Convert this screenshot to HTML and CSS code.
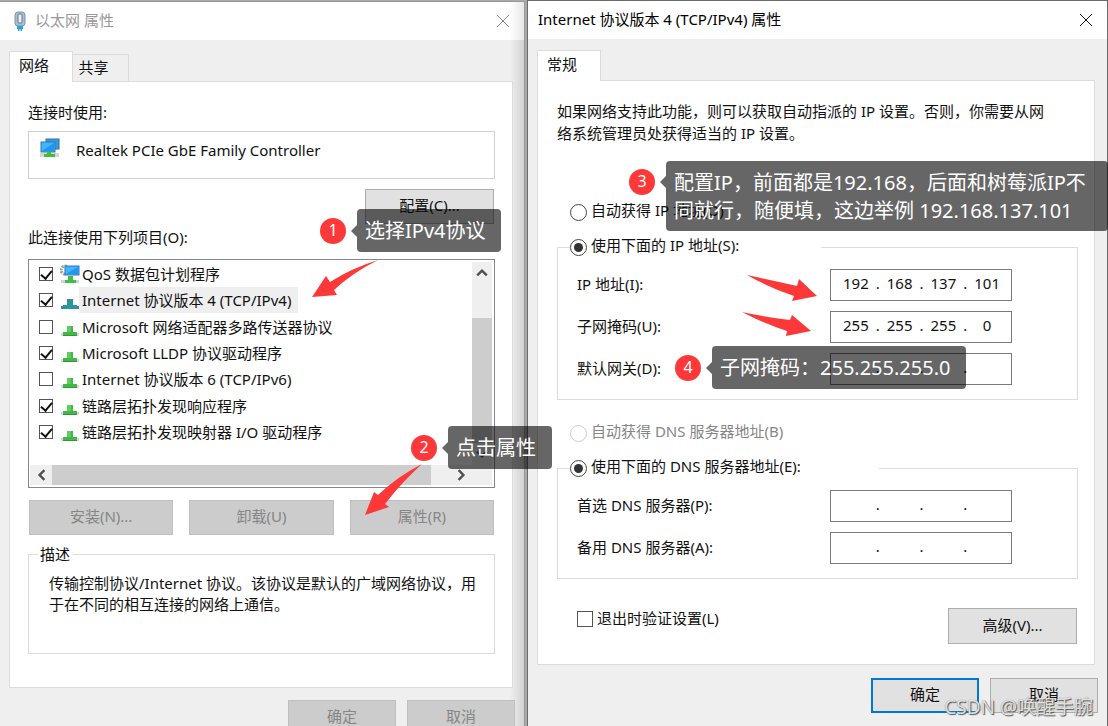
FILE: index.html
```html
<!DOCTYPE html>
<html lang="zh-CN">
<head>
  <meta charset="UTF-8">
  <title>以太网 属性</title>
  <link rel="stylesheet" href="styles.css">
</head>
<body>
  <!-- shared icons -->
  <svg class="sprite" aria-hidden="true">
    <symbol id="protocol" viewBox="0 0 18 12">
      <path d="M0 8h4v3H0zM14 8h4v3h-4z" fill="#d8d8d8"/>
      <path d="M6 1h6v6h4v4H2V7h4z" fill="#45b648"/>
      <path d="M6 1h4v6H6z" fill="#5fce5c"/>
      <path d="M2 10h14v1H2z" fill="#2f9b38"/>
    </symbol>
    <symbol id="close" viewBox="0 0 14 14">
      <path d="M1 1l12 12M13 1L1 13" fill="none" stroke="currentColor"/>
    </symbol>
    <symbol id="chevron" viewBox="0 0 10 10">
      <path d="M1 7l4-4 4 4" fill="none" stroke="#505050" stroke-width="2"/>
    </symbol>
  </svg>

  <main class="desktop">
    <section class="dialog inactive">
      <header class="titlebar">
        <svg class="plug" viewBox="0 0 12 20" width="12" height="20">
          <rect x="1" y="1" width="10" height="14" rx="3" fill="#a9c0d2" stroke="#7d94a8"/>
          <rect x="4" y="3" width="4" height="9" rx="1" fill="#e8eff5" stroke="#66798b"/>
          <path d="M3 15h6v3H8v2H6.500v-2h-1v2H4v-2H3z" fill="#25a5da"/>
        </svg>
        <h1>以太网 属性</h1>
        <button class="close" aria-label="关闭"><svg><use href="#close"/></svg></button>
      </header>

      <nav class="tabs">
        <button class="tab active">网络</button>
        <button class="tab">共享</button>
      </nav>

      <div class="panel">
        <p class="label">连接时使用:</p>
        <div class="adapter">
          <svg viewBox="0 0 20 20" width="20" height="20">
            <path d="M0 15h19v4H0z" fill="#d5d5d5"/>
            <rect x="6" y="1" width="13" height="10" fill="#2e9be8" stroke="#34719c"/>
            <rect x="1" y="4" width="14" height="10" fill="#42b4ff" stroke="#2f78ab"/>
            <path d="M2 13L14 5v8z" fill="#2196ef"/>
            <path d="M7 14h4v2h4v3H4v-3h3z" fill="#43bd3d"/>
          </svg>
          <span>Realtek PCIe GbE Family Controller</span>
        </div>
        <button class="btn configure">配置(C)...</button>

        <p class="label items-label">此连接使用下列项目(O):</p>
        <div class="listbox">
          <ul class="items">
            <li>
              <input type="checkbox" id="qos" checked>
              <svg class="qos" viewBox="0 0 20 20">
                <path d="M1 16h18v3H1z" fill="#d3d3d3"/>
                <circle cx="5" cy="6" r="4" fill="none" stroke="#98a2aa" stroke-width="3" stroke-dasharray="2 1"/>
                <rect x="5" y="2" width="14" height="9" fill="#42b4ff" stroke="#287bb5"/>
                <path d="M6 10l12-7v7z" fill="#2196ef"/>
                <path d="M8 12h5v4h3v3H5v-3h3z" fill="#43bd4a"/>
              </svg>
              <label for="qos">QoS 数据包计划程序</label>
            </li>
            <li class="selected">
              <input type="checkbox" id="ipv4" checked>
              <svg viewBox="0 0 18 12">
                <path d="M0 8h18v3H0z" fill="#3b86b4"/>
                <path d="M6 1h6v6h4v4H2V7h4z" fill="#2a9895"/>
                <path d="M6 1h6v1H6z" fill="#3b86b4"/>
              </svg>
              <label for="ipv4">Internet 协议版本 4 (TCP/IPv4)</label>
            </li>
            <li>
              <input type="checkbox" id="mux">
              <svg><use href="#protocol"/></svg>
              <label for="mux">Microsoft 网络适配器多路传送器协议</label>
            </li>
            <li>
              <input type="checkbox" id="lldp" checked>
              <svg><use href="#protocol"/></svg>
              <label for="lldp">Microsoft LLDP 协议驱动程序</label>
            </li>
            <li>
              <input type="checkbox" id="ipv6">
              <svg><use href="#protocol"/></svg>
              <label for="ipv6">Internet 协议版本 6 (TCP/IPv6)</label>
            </li>
            <li>
              <input type="checkbox" id="responder" checked>
              <svg><use href="#protocol"/></svg>
              <label for="responder">链路层拓扑发现响应程序</label>
            </li>
            <li>
              <input type="checkbox" id="mapper" checked>
              <svg><use href="#protocol"/></svg>
              <label for="mapper">链路层拓扑发现映射器 I/O 驱动程序</label>
            </li>
          </ul>
          <div class="scroll-y">
            <svg><use href="#chevron"/></svg>
            <div class="thumb"></div>
            <svg class="down"><use href="#chevron"/></svg>
          </div>
          <div class="scroll-x">
            <svg class="left"><use href="#chevron"/></svg>
            <div class="thumb"></div>
            <svg class="right"><use href="#chevron"/></svg>
          </div>
        </div>

        <div class="actions">
          <button class="btn" disabled>安装(N)...</button>
          <button class="btn" disabled>卸载(U)</button>
          <button class="btn" disabled>属性(R)</button>
        </div>

        <fieldset class="description">
          <legend>描述</legend>
          <p>传输控制协议/Internet 协议。该协议是默认的广域网络协议，用于在不同的相互连接的网络上通信。</p>
        </fieldset>
      </div>

      <footer class="buttons">
        <button class="btn" disabled>确定</button>
        <button class="btn" disabled>取消</button>
      </footer>
    </section>

    <section class="dialog front">
      <header class="titlebar">
        <h1>Internet 协议版本 4 (TCP/IPv4) 属性</h1>
        <button class="close" aria-label="关闭"><svg><use href="#close"/></svg></button>
      </header>

      <nav class="tabs">
        <button class="tab active">常规</button>
      </nav>

      <form class="panel">
        <p class="intro">如果网络支持此功能，则可以获取自动指派的 IP 设置。否则，你需要从网<br>络系统管理员处获得适当的 IP 设置。</p>

        <div class="choice">
          <input type="radio" name="ip" id="ip-auto">
          <label for="ip-auto">自动获得 IP 地址(O)</label>
        </div>
        <fieldset class="group">
          <legend class="choice">
            <input type="radio" name="ip" id="ip-manual" checked>
            <label for="ip-manual">使用下面的 IP 地址(S):</label>
          </legend>
          <div class="row">
            <label for="ip1">IP 地址(I):</label>
            <div class="ip">
              <input id="ip1" value="192">.<input aria-label="IP 2" value="168">.<input aria-label="IP 3" value="137">.<input aria-label="IP 4" value="101">
            </div>
          </div>
          <div class="row">
            <label for="mask1">子网掩码(U):</label>
            <div class="ip">
              <input id="mask1" value="255">.<input aria-label="掩码 2" value="255">.<input aria-label="掩码 3" value="255">.<input aria-label="掩码 4" value="0">
            </div>
          </div>
          <div class="row">
            <label for="gw1">默认网关(D):</label>
            <div class="ip">
              <input id="gw1">.<input aria-label="网关 2">.<input aria-label="网关 3">.<input aria-label="网关 4">
            </div>
          </div>
        </fieldset>

        <div class="choice dns-auto">
          <input type="radio" name="dns" id="dns-auto" disabled>
          <label for="dns-auto">自动获得 DNS 服务器地址(B)</label>
        </div>
        <fieldset class="group dns">
          <legend class="choice">
            <input type="radio" name="dns" id="dns-manual" checked>
            <label for="dns-manual">使用下面的 DNS 服务器地址(E):</label>
          </legend>
          <div class="row">
            <label for="dns1">首选 DNS 服务器(P):</label>
            <div class="ip">
              <input id="dns1">.<input aria-label="首选 2">.<input aria-label="首选 3">.<input aria-label="首选 4">
            </div>
          </div>
          <div class="row">
            <label for="alt1">备用 DNS 服务器(A):</label>
            <div class="ip">
              <input id="alt1">.<input aria-label="备用 2">.<input aria-label="备用 3">.<input aria-label="备用 4">
            </div>
          </div>
        </fieldset>

        <div class="validate">
          <input type="checkbox" id="validate">
          <label for="validate">退出时验证设置(L)</label>
          <button type="button" class="btn">高级(V)...</button>
        </div>
      </form>

      <footer class="buttons">
        <button class="btn default">确定</button>
        <button class="btn">取消</button>
      </footer>
    </section>

    <!-- notes drawn over the windows -->
    <svg class="arrows" aria-hidden="true">
      <path d="M312 297L326 276L330 282Q352 268 378 260Q352 273 334 290L337 295z"/>
      <path d="M365 515L374 492L378 495Q398 476 422 464Q402 482 385 504L389 507z"/>
      <path d="M747 275Q770 280 797 286L799 279L817 296L792 301L794 296Q770 288 747 275z"/>
      <path d="M742 312Q765 317 790 320L792 315L811 331L786 336L787 331Q765 324 742 312z"/>
    </svg>
    <div class="note note-1"><b>1</b><span>选择IPv4协议</span></div>
    <div class="note note-2"><b>2</b><span>点击属性</span></div>
    <div class="note note-3"><b>3</b><span>配置IP，前面都是192.168，后面和树莓派IP不<br>同就行，随便填，这边举例 192.168.137.101</span></div>
    <div class="note note-4"><b>4</b><span>子网掩码：255.255.255.0</span></div>
    <div class="watermark">CSDN @唤醒手腕</div>
  </main>
</body>
</html>
```

FILE: styles.css
```css
* {
  box-sizing: border-box;
}

body {
  margin: 0;
  background: #a9a9a9;
  color: #111;
  font: 15px/20px "Noto Sans", "Noto Sans CJK SC", sans-serif;
}

h1, p, ul, fieldset, legend {
  margin: 0;
  padding: 0;
}

button, input {
  font: inherit;
  color: inherit;
  margin: 0;
  padding: 0;
}

.sprite {
  display: none;
}

.desktop {
  position: relative;
  display: grid;
  grid-template-columns: 525fr 581fr;
  gap: 2px;
  height: 100vh;
  overflow: hidden;
}

/* Windows */
.dialog {
  display: flex;
  flex-direction: column;
  background: #efefef;
  border: 1px solid #6b6b6b;
}

.inactive {
  margin-top: 1px;
  border-color: #999;
  border-left: none;
  background: linear-gradient(to left, #d3d3d3, #efefef 14px);
}

.titlebar {
  display: flex;
  align-items: center;
  flex: none;
  height: 38px;
  padding: 0 14px 0 10px;
  background: #fff;
}

.titlebar h1 {
  flex: 1;
  padding-bottom: 2px;
  font-size: 15px;
  font-weight: normal;
  color: #000;
}

.inactive .titlebar {
  padding-left: 14px;
  background: linear-gradient(to left, #e6e6e6, #fff 14px);
}

.inactive .titlebar h1 {
  color: #999;
}

.plug {
  margin-right: 9px;
}

.close {
  width: 14px;
  height: 14px;
  border: none;
  background: none;
}

.close svg {
  display: block;
  width: 14px;
  height: 14px;
}

.inactive .close {
  color: #888;
}

.tabs {
  display: flex;
  align-items: flex-end;
  flex: none;
  height: 41px;
  padding: 0 9px;
}

.tab {
  width: 56px;
  height: 27px;
  padding: 0 14px 2px 0;
  border: 1px solid #dcdcdc;
  border-width: 1px 1px 0 0;
  background: #efefef;
}

.tab.active {
  position: relative;
  width: 64px;
  height: 31px;
  margin-bottom: -1px;
  padding-bottom: 4px;
  border-width: 1px 1px 0 1px;
  background: #fff;
}

.panel {
  flex: none;
  margin: 0 11px 0 9px;
  padding: 21px 17px 33px 18px;
  border: 1px solid #dcdcdc;
  background: #fff;
}

.btn {
  height: 35px;
  padding-bottom: 3px;
  border: 1px solid #adadad;
  background: #e1e1e1;
}

.btn:disabled {
  border-color: #bfbfbf;
  background: #ccc;
  color: #868686;
}

.btn.default {
  border: 2px solid #0078d7;
}

.buttons {
  display: flex;
  justify-content: flex-end;
  gap: 11px;
  padding: 12px 9px;
}

.buttons .btn {
  width: 108px;
}

/* Ethernet properties */
.label {
  height: 20px;
  line-height: 18px;
}

.adapter {
  display: flex;
  gap: 16px;
  height: 48px;
  margin-top: 8px;
  padding: 6px 11px;
  border: 1px solid #d0d0d0;
}

.adapter span {
  padding-top: 2px;
}

.configure {
  display: block;
  width: 129px;
  margin: 10px 1px 0 auto;
}

.items-label {
  margin-top: 4px;
}

.listbox {
  display: grid;
  grid-template: 1fr 20px / 1fr 20px;
  height: 229px;
  margin-top: 11px;
  padding: 1px 2px 2px 1px;
  border: 1px solid #828790;
}

.items {
  display: grid;
  grid-auto-rows: 1fr;
  height: 184px;
  list-style: none;
}

.items li {
  display: flex;
  align-items: center;
  padding-left: 9px;
}

.items svg {
  width: 18px;
  height: 12px;
  margin: 8px 0 0 8px;
}

.items .qos {
  width: 20px;
  height: 20px;
  margin: 0 0 0 7px;
}

.items label {
  height: 26px;
  padding: 0 7px 0 3px;
  line-height: 26px;
}

.items .qos + label {
  padding-left: 2px;
}

.selected label {
  background: #efefef;
}

input[type="checkbox"] {
  appearance: none;
  display: grid;
  place-items: center;
  width: 14px;
  height: 14px;
  border: 1px solid #555;
  background: #fff;
}

input[type="checkbox"]:checked::after {
  content: "";
  width: 5px;
  height: 9px;
  margin-bottom: 2px;
  border: solid #111;
  border-width: 0 2px 2px 0;
  transform: rotate(40deg);
}

.scroll-y, .scroll-x {
  display: flex;
  align-items: center;
  background: #efefef;
}

.scroll-y {
  flex-direction: column;
  margin-top: 1px;
  padding: 5px 0;
}

.scroll-x {
  grid-column: 1 / -1;
  padding: 0 25px 0 6px;
}

.listbox .scroll-x svg, .listbox .scroll-y svg {
  flex: none;
  width: 12px;
  height: 12px;
}

.thumb {
  background: #cdcdcd;
}

.scroll-y .thumb {
  flex: 1;
  width: 100%;
  margin: 39px 0 5px;
}

.scroll-x .thumb {
  flex: 1;
  height: 100%;
  margin: 0 24px 0 4px;
}

.down { transform: rotate(180deg); }
.left { transform: rotate(-90deg); }
.right { transform: rotate(90deg); }

.actions {
  display: grid;
  grid-template-columns: repeat(3, 1fr);
  gap: 16px;
  margin: 12px 1px 0;
}

.description {
  height: 109px;
  margin-top: 10px;
  padding: 0 14px 0 20px;
  border: 1px solid #dcdcdc;
}

.description legend {
  margin-left: -11px;
  padding: 0 3px 0 2px;
  line-height: 18px;
}

.description p {
  padding-top: 10px;
  line-height: 21px;
}

/* IPv4 properties */
.front .panel {
  margin-right: 12px;
  padding: 19px 16px 20px 19px;
}

.intro {
  line-height: 22px;
  white-space: nowrap;
}

.choice {
  display: flex;
  align-items: center;
  gap: 4px;
}

.choice label {
  padding-bottom: 4px;
  line-height: 16px;
}

.row label {
  padding-bottom: 2px;
  line-height: 18px;
}

div.choice {
  margin: 58px 0 0 13px;
}

div.dns-auto {
  margin-top: 23px;
  color: #868686;
}

input[type="radio"] {
  appearance: none;
  display: grid;
  place-items: center;
  width: 17px;
  height: 17px;
  border: 1px solid #444;
  border-radius: 50%;
  background: #fff;
}

input[type="radio"]:disabled {
  border-color: #ccc;
}

input[type="radio"]:checked::after {
  content: "";
  width: 9px;
  height: 9px;
  border-radius: 50%;
  background: #333;
}

.group {
  display: flex;
  flex-direction: column;
  gap: 10px;
  margin-top: 15px;
  padding: 12px 65px 14px 19px;
  border: 1px solid #dcdcdc;
}

.group legend {
  width: 251px;
  margin-left: -7px;
}

.dns legend {
  width: 309px;
}

.row {
  display: flex;
  align-items: center;
  justify-content: space-between;
}

.ip {
  display: flex;
  align-items: center;
  width: 182px;
  height: 32px;
  padding: 0 4px 4px 5px;
  border: 1px solid #7a7a7a;
}

.ip input {
  width: 0;
  flex: 1;
  margin: 0 3px;
  border: none;
  background: none;
  text-align: center;
}

.validate {
  display: flex;
  align-items: flex-start;
  gap: 4px;
  margin: 29px 1px 0 20px;
}

.validate input[type="checkbox"] {
  width: 16px;
  height: 16px;
  margin-top: 3px;
}

.validate .btn {
  width: 129px;
  height: 36px;
  margin-left: auto;
}

.front .buttons {
  padding-top: 13px;
}

/* Notes */
.arrows {
  position: absolute;
  inset: 0;
  width: 100%;
  height: 100%;
  fill: #fd3838;
  pointer-events: none;
}

.note {
  position: absolute;
  display: flex;
  align-items: center;
  gap: 11px;
  color: #fff;
  font-size: 20px;
  line-height: 28px;
  white-space: nowrap;
}

.note b {
  width: 26px;
  height: 26px;
  border-radius: 50%;
  background: #fd3838;
  font-size: 16px;
  font-weight: normal;
  line-height: 24px;
  text-align: center;
}

.note span {
  position: relative;
  padding: 8px 16px 7px 8px;
  border-radius: 4px;
  background: rgba(0, 0, 0, 0.6);
}

.note span::before {
  content: "";
  position: absolute;
  top: 50%;
  left: -6px;
  margin-top: -6px;
  border: solid transparent;
  border-width: 6px 6px 6px 0;
  border-right-color: rgba(0, 0, 0, 0.6);
}

.note-1 { left: 320px; top: 209px; }
.note-2 { left: 411px; top: 426px; }
.note-3 { left: 629px; top: 161px; }
.note-4 { left: 675px; top: 346px; }

.note-3 {
  right: 0;
  align-items: flex-start;
}

.note-3 b {
  margin-top: 8px;
}

.note-3 span {
  flex: 1;
  padding-bottom: 6px;
}

.note-3 span::before {
  top: 21px;
}

.watermark {
  position: absolute;
  right: 15px;
  bottom: 5px;
  color: rgba(255, 255, 255, 0.8);
  font-size: 19px;
  line-height: 28px;
  text-shadow: 1px 1px 1px #555, 0 0 1px #777;
}
```
